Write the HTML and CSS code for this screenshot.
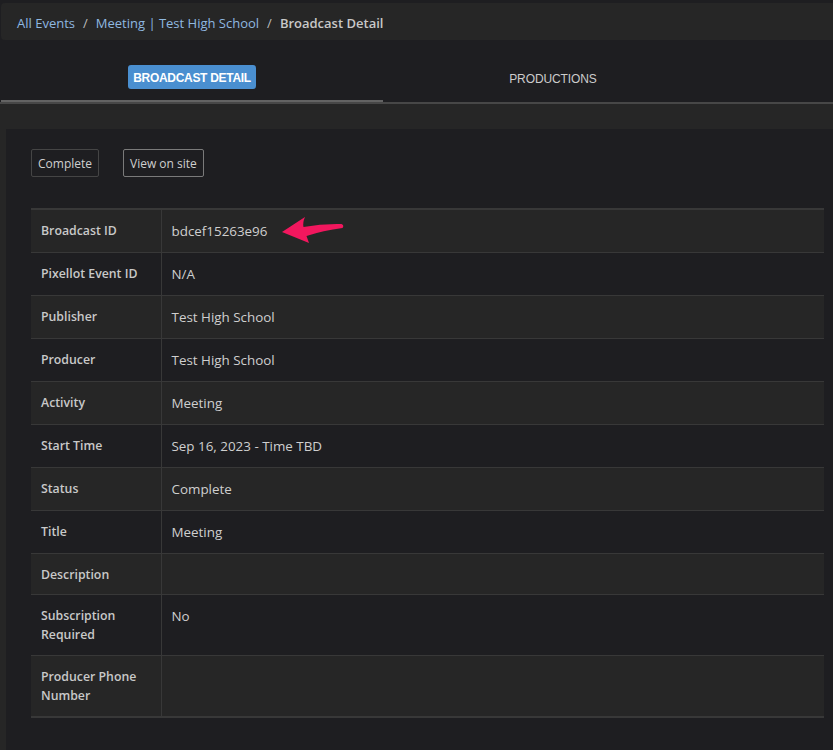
FILE: index.html
```html
<!DOCTYPE html>
<html lang="en">
<head>
<meta charset="utf-8">
<title>Broadcast Detail</title>
<link rel="stylesheet" href="styles.css">
</head>
<body>
<nav class="crumbs">
  <a href="#" class="crumb-link">All Events</a>
  <span class="sep">/</span>
  <a href="#" class="crumb-link">Meeting | Test High School</a>
  <span class="sep">/</span>
  <span class="crumb-current">Broadcast Detail</span>
</nav>

<div class="tabs">
  <div class="tab tab-active"><span class="pill">BROADCAST DETAIL</span></div>
  <div class="tab"><span class="tab-label">PRODUCTIONS</span></div>
</div>

<main class="wrap">
  <section class="card">
    <div class="actions">
      <button class="btn">Complete</button>
      <button class="btn btn-light">View on site</button>
    </div>
    <table class="detail">
      <tbody>
        <tr class="odd"><th>Broadcast ID</th><td><span class="id-cell">bdcef15263e96<svg class="arrow" width="66" height="30" viewBox="280 213 66 30"><path d="M282,230 L305,215 Q302.5,220.5 303.5,225 Q322,221.5 341.5,222 Q344.5,223.5 342.5,226 Q323,228.5 306.5,234 L309,241 Z" fill="#f2175e"/></svg></span></td></tr>
        <tr><th>Pixellot Event ID</th><td>N/A</td></tr>
        <tr class="odd"><th>Publisher</th><td>Test High School</td></tr>
        <tr><th>Producer</th><td>Test High School</td></tr>
        <tr class="odd"><th>Activity</th><td>Meeting</td></tr>
        <tr><th>Start Time</th><td>Sep 16, 2023 - Time TBD</td></tr>
        <tr class="odd"><th>Status</th><td>Complete</td></tr>
        <tr><th>Title</th><td>Meeting</td></tr>
        <tr class="odd"><th>Description</th><td></td></tr>
        <tr class="tall"><th>Subscription Required</th><td>No</td></tr>
        <tr class="odd tall"><th>Producer Phone Number</th><td></td></tr>
      </tbody>
    </table>
  </section>
</main>
</body>
</html>
```

FILE: styles.css
```css
* { box-sizing: border-box; }

html, body {
  margin: 0;
  padding: 0;
  background: #1e1e21;
  font-family: "Open Sans", "Noto Sans", sans-serif;
  color: #cfcfcf;
}

body {
  padding-top: 3px;
  height: 750px;
  overflow: hidden;
}

.crumbs {
  margin-left: 1px;
  height: 37px;
  background: #262626;
  border-radius: 4px 0 0 4px;
  display: flex;
  align-items: center;
  padding-left: 16px;
  padding-top: 2px;
  font-size: 13px;
  gap: 8px;
}

.crumb-link {
  color: #8fb8e0;
  text-decoration: none;
}

.sep { color: #bdbdbd; }

.crumb-current {
  color: #c8c8c8;
  font-weight: 600;
}

.tabs {
  display: flex;
  height: 64px;
  border-bottom: 2px solid #474747;
  font-family: "Liberation Sans", Arial, sans-serif;
}

.tab {
  display: flex;
  justify-content: center;
  align-items: flex-start;
  padding-top: 25px;
}

.tab-active {
  margin-left: 1px;
  width: 382px;
  height: 62px;
  border-bottom: 2px solid #636363;
}

.tab:nth-child(2) {
  width: 340px;
  padding-top: 32px;
}

.pill {
  background: #4a8fd0;
  color: #ffffff;
  font-size: 12px;
  font-weight: bold;
  letter-spacing: -0.3px;
  height: 24px;
  width: 128px;
  border-radius: 3px;
  display: flex;
  align-items: center;
  justify-content: center;
  padding-top: 1px;
}

.tab-label {
  color: #cccccc;
  font-size: 12px;
  letter-spacing: -0.1px;
}

.wrap {
  background: #262626;
  padding-top: 25px;
  padding-left: 6px;
}

.card {
  background: #1e1e21;
  padding: 20px 9px 40px 25px;
  min-height: 640px;
}

.actions {
  display: flex;
  gap: 24px;
  margin-bottom: 31px;
}

.btn {
  font-family: "Open Sans", "Noto Sans", sans-serif;
  font-size: 12px;
  color: #cfcfcf;
  background: transparent;
  border: 1px solid #454545;
  border-radius: 2px;
  height: 28px;
  padding: 2px 6px 0;
  line-height: 24px;
}

.btn-light { border-color: #7a7a7a; }

.detail {
  width: 100%;
  border-collapse: collapse;
  border-top: 2px solid #383838;
  border-bottom: 2px solid #383838;
}

.detail tr { border-top: 1px solid #383838; }

.detail tr.odd { background: #262626; }

.detail th {
  width: 130px;
  text-align: left;
  vertical-align: top;
  font-size: 12.3px;
  font-weight: 600;
  color: #c9c9c9;
  line-height: 19px;
  padding: 11px 10px 10px 10px;
  border-right: 1px solid #383838;
}

.detail tr.tall th { padding-bottom: 11px; }

.detail td {
  vertical-align: top;
  font-size: 13.4px;
  line-height: 21px;
  padding: 11px 10px 10px 10px;
  color: #cfcfcf;
}

.id-cell {
  position: relative;
  display: inline-block;
}

.arrow {
  position: absolute;
  left: 108px;
  top: -6px;
}
```
